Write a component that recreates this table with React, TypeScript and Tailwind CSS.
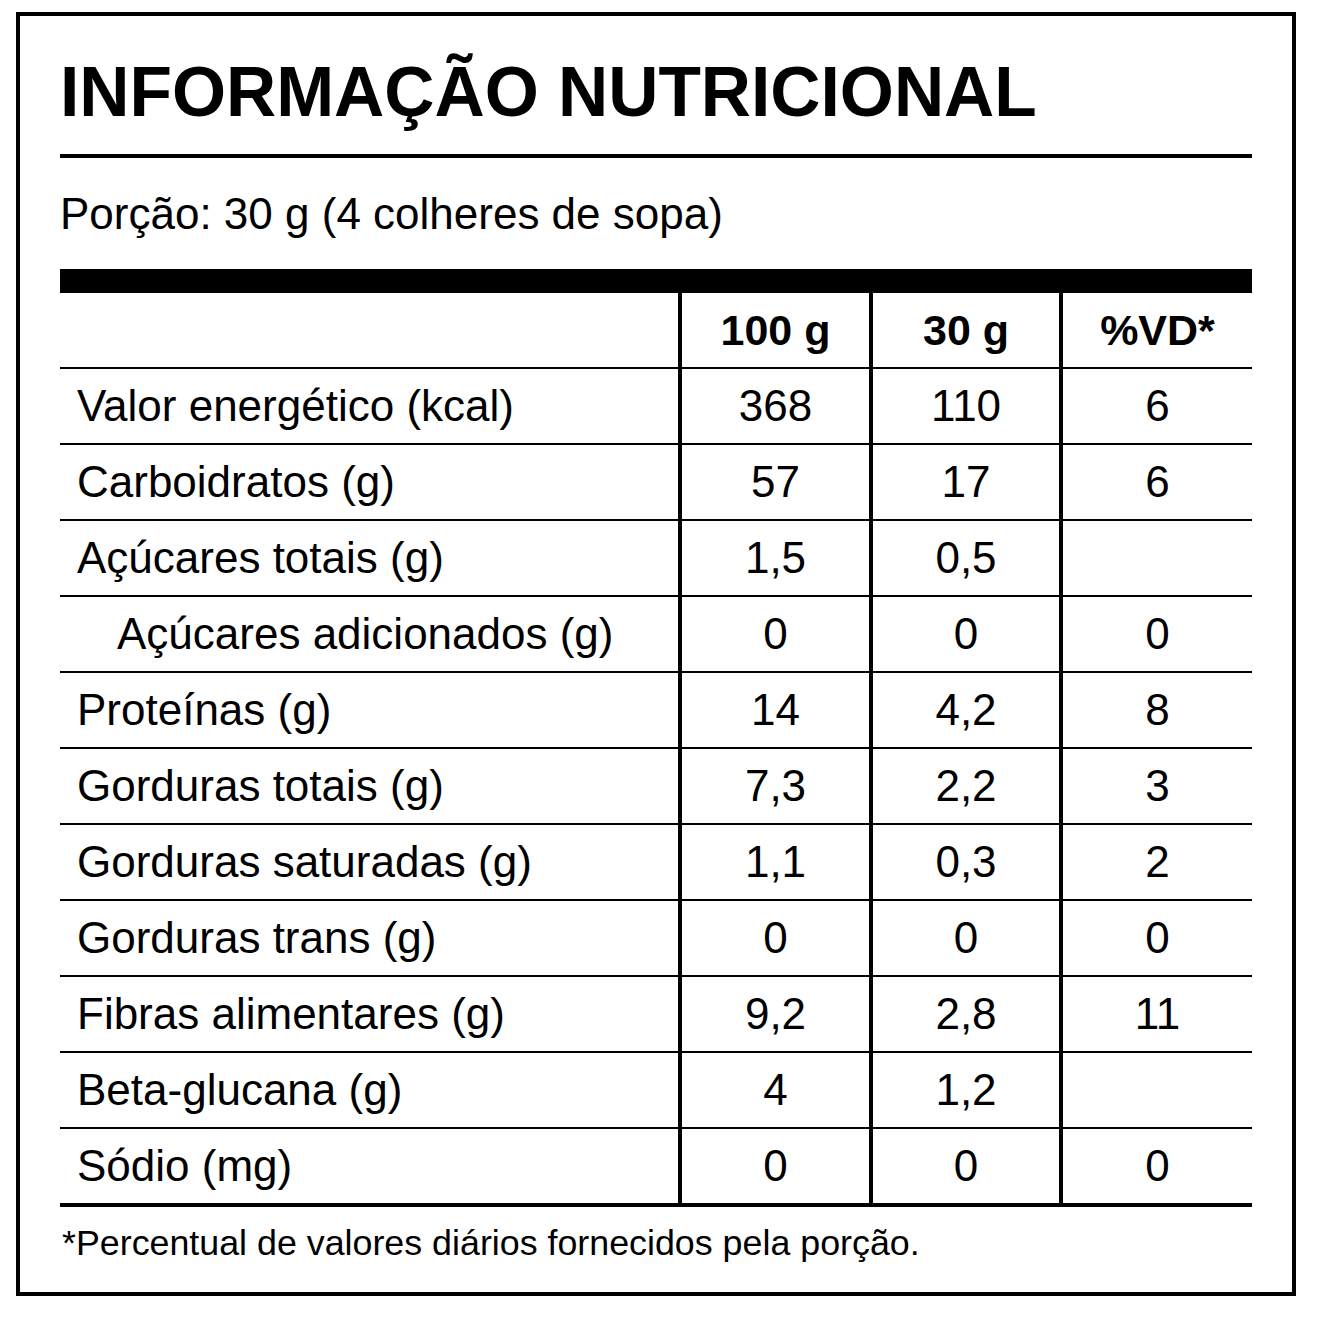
const rows: { label: string; a: string; b: string; vd: string; indent?: boolean }[] = [
  { label: 'Valor energético (kcal)', a: '368', b: '110', vd: '6' },
  { label: 'Carboidratos (g)', a: '57', b: '17', vd: '6' },
  { label: 'Açúcares totais (g)', a: '1,5', b: '0,5', vd: '' },
  { label: 'Açúcares adicionados (g)', a: '0', b: '0', vd: '0', indent: true },
  { label: 'Proteínas (g)', a: '14', b: '4,2', vd: '8' },
  { label: 'Gorduras totais (g)', a: '7,3', b: '2,2', vd: '3' },
  { label: 'Gorduras saturadas (g)', a: '1,1', b: '0,3', vd: '2' },
  { label: 'Gorduras trans (g)', a: '0', b: '0', vd: '0' },
  { label: 'Fibras alimentares (g)', a: '9,2', b: '2,8', vd: '11' },
  { label: 'Beta-glucana (g)', a: '4', b: '1,2', vd: '' },
  { label: 'Sódio (mg)', a: '0', b: '0', vd: '0' },
];

export default function App() {
  return (
    <div className="min-h-screen bg-white text-black font-['Liberation_Sans',Arial,sans-serif]">
      <div className="ml-4 mt-3 w-[1280px] h-[1284px] border-4 border-black px-[40px]">
        {/* Title */}
        <h1 className="pt-[41px] text-[69.5px] leading-[70px] font-bold">
          INFORMAÇÃO NUTRICIONAL
        </h1>
        <div className="mt-[27px] h-[4px] bg-black" />

        {/* Portion */}
        <p className="mt-[34px] text-[44px] leading-[43px]">Porção: 30 g (4 colheres de sopa)</p>
        <div className="mt-[34px] h-[24px] bg-black" />

        {/* Table */}
        <div className="grid grid-cols-[618px_191px_190px_193px] text-[44px] leading-[44px]">
          <div className="h-[76px] border-b-2 border-black" />
          {['100 g', '30 g', '%VD*'].map((h) => (
            <div
              key={h}
              className="h-[76px] border-b-2 border-l-4 border-black flex items-center justify-center font-bold text-[43px]"
            >
              {h}
            </div>
          ))}

          {rows.map((r, i) => {
            const last = i === rows.length - 1;
            const bottom = last ? 'h-[78px] border-b-4' : 'h-[76px] border-b-2';
            return (
              <div key={r.label} className="contents">
                <div
                  className={`${bottom} border-black flex items-center ${
                    r.indent ? 'pl-[57px]' : 'pl-[17px]'
                  }`}
                >
                  {r.label}
                </div>
                <div className={`${bottom} border-l-4 border-black flex items-center justify-center`}>{r.a}</div>
                <div className={`${bottom} border-l-4 border-black flex items-center justify-center`}>{r.b}</div>
                <div className={`${bottom} border-l-4 border-black flex items-center justify-center`}>{r.vd}</div>
              </div>
            );
          })}
        </div>

        {/* Footnote */}
        <p className="mt-[18px] pl-[2px] text-[35.8px] leading-[36px]">
          *Percentual de valores diários fornecidos pela porção.
        </p>
      </div>
    </div>
  );
}
